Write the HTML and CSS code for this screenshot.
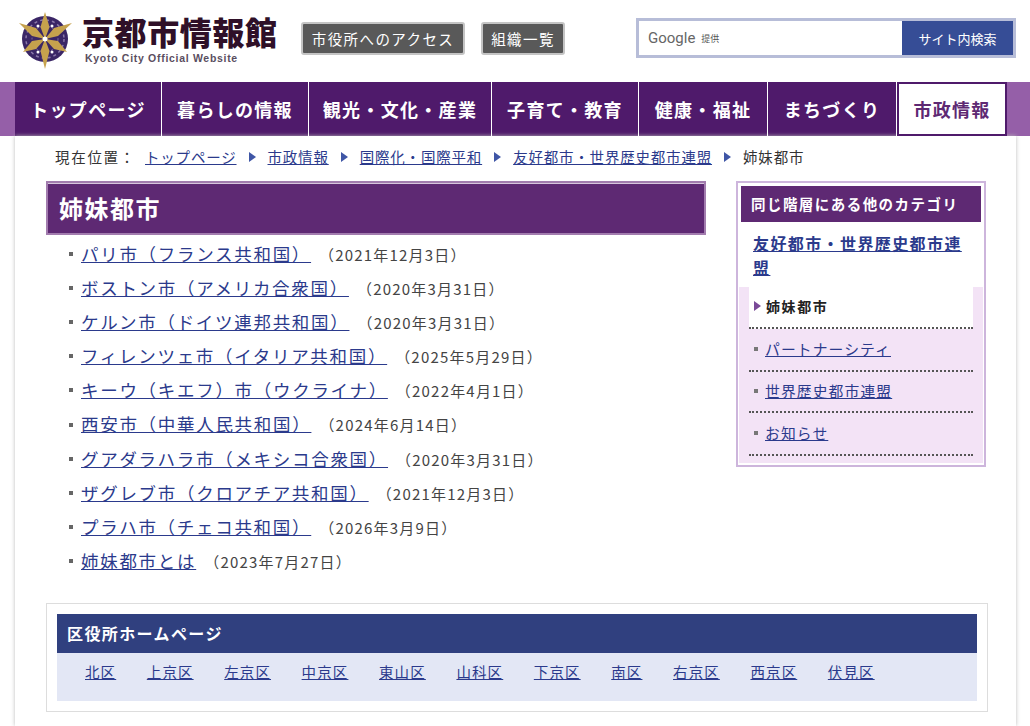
FILE: index.html
```html
<!DOCTYPE html>
<html lang="ja">
<head>
  <meta charset="UTF-8" />
  <meta name="viewport" content="width=device-width, initial-scale=1.0"/>
  <title>姉妹都市 京都市情報館</title>
  <link rel="stylesheet" href="styles.css">
</head>
<body>
  <div class="header">
    <a class="logo" href="#">
      <svg class="crest" width="56" height="62" viewBox="0 0 56 62">
        <circle cx="28" cy="31" r="23" fill="#3a2666"/>
        <circle cx="28" cy="31" r="19" fill="none" stroke="#8a78a8" stroke-width="1.5" stroke-dasharray="3 3"/>
        <circle cx="28" cy="31" r="13" fill="none" stroke="#7d6a9e" stroke-width="1" stroke-dasharray="2 2"/>
        <g fill="#fff">
          <circle cx="17" cy="25" r="2"/><circle cx="39" cy="25" r="2"/>
          <circle cx="17" cy="37" r="2"/><circle cx="39" cy="37" r="2"/>
          <circle cx="21" cy="18" r="1.5"/><circle cx="35" cy="18" r="1.5"/>
          <circle cx="21" cy="44" r="1.5"/><circle cx="35" cy="44" r="1.5"/>
        </g>
        <g fill="#c6a24d">
          <path d="M28 4 L32.5 19 L28 31 L23.5 19 Z"/>
          <path d="M28 61 L32.5 43 L28 31 L23.5 43 Z"/>
          <path d="M2 15 L19 20 L28 31 L15 28 Z"/>
          <path d="M55 15 L37 20 L28 31 L41 28 Z"/>
          <path d="M6 44 L15 33 L28 31 L19 41 Z"/>
          <path d="M50 44 L41 33 L28 31 L37 41 Z"/>
        </g>
        <circle cx="28" cy="31" r="2.5" fill="#fff"/>
      </svg>
      <span class="logo-text">
        <span class="logo-title">京都市情報館</span>
        <span class="logo-sub">Kyoto City Official Website</span>
      </span>
    </a>
    <a class="head-btn btn-access" href="#">市役所へのアクセス</a>
    <a class="head-btn btn-org" href="#">組織一覧</a>
    <div class="search">
      <div class="search-input"><span class="google">Google</span><span class="teikyo">提供</span></div>
      <button class="search-btn">サイト内検索</button>
    </div>
  </div>

  <div class="nav">
    <ul class="nav-list">
      <li class="w1"><a href="#">トップページ</a></li>
      <li class="w1"><a href="#">暮らしの情報</a></li>
      <li class="w2"><a href="#">観光・文化・産業</a></li>
      <li class="w1"><a href="#">子育て・教育</a></li>
      <li class="w3"><a href="#">健康・福祉</a></li>
      <li class="w3"><a href="#">まちづくり</a></li>
      <li class="current"><a href="#">市政情報</a></li>
    </ul>
  </div>

  <div class="page">
    <div class="breadcrumb">
      <span class="here">現在位置：</span>
      <a href="#">トップページ</a><i class="arrow"></i>
      <a href="#">市政情報</a><i class="arrow"></i>
      <a href="#">国際化・国際平和</a><i class="arrow"></i>
      <a href="#">友好都市・世界歴史都市連盟</a><i class="arrow"></i>
      <span>姉妹都市</span>
    </div>

    <div class="columns">
      <div class="main">
        <h1 class="title">姉妹都市</h1>
        <ul class="page-list">
          <li><a href="#">パリ市（フランス共和国）</a><span class="date">（2021年12月3日）</span></li>
          <li><a href="#">ボストン市（アメリカ合衆国）</a><span class="date">（2020年3月31日）</span></li>
          <li><a href="#">ケルン市（ドイツ連邦共和国）</a><span class="date">（2020年3月31日）</span></li>
          <li><a href="#">フィレンツェ市（イタリア共和国）</a><span class="date">（2025年5月29日）</span></li>
          <li><a href="#">キーウ（キエフ）市（ウクライナ）</a><span class="date">（2022年4月1日）</span></li>
          <li><a href="#">西安市（中華人民共和国）</a><span class="date">（2024年6月14日）</span></li>
          <li><a href="#">グアダラハラ市（メキシコ合衆国）</a><span class="date">（2020年3月31日）</span></li>
          <li><a href="#">ザグレブ市（クロアチア共和国）</a><span class="date">（2021年12月3日）</span></li>
          <li><a href="#">プラハ市（チェコ共和国）</a><span class="date">（2026年3月9日）</span></li>
          <li><a href="#">姉妹都市とは</a><span class="date">（2023年7月27日）</span></li>
        </ul>
      </div>

      <div class="side">
        <h2 class="side-head">同じ階層にある他のカテゴリ</h2>
        <p class="side-parent"><a href="#">友好都市・世界歴史都市連盟</a></p>
        <ul class="side-list">
          <li class="active">姉妹都市</li>
          <li class="h44"><a href="#">パートナーシティ</a></li>
          <li class="h41"><a href="#">世界歴史都市連盟</a></li>
          <li class="h43"><a href="#">お知らせ</a></li>
        </ul>
      </div>
    </div>

    <div class="ward-box">
      <div class="ward-head">区役所ホームページ</div>
      <div class="ward-links">
        <a href="#">北区</a>
        <a href="#">上京区</a>
        <a href="#">左京区</a>
        <a href="#">中京区</a>
        <a href="#">東山区</a>
        <a href="#">山科区</a>
        <a href="#">下京区</a>
        <a href="#">南区</a>
        <a href="#">右京区</a>
        <a href="#">西京区</a>
        <a href="#">伏見区</a>
      </div>
    </div>
  </div>
</body>
</html>
```

FILE: styles.css
```css
* {
  box-sizing: border-box;
}

body {
  margin: 0;
  background: #fff;
  color: #333;
  font-family: "Noto Sans CJK JP", "Noto Sans", sans-serif;
  font-size: 15px;
}

a {
  color: #2b3a8c;
}

ul {
  list-style: none;
  margin: 0;
  padding: 0;
}

/* header */
.header {
  display: flex;
  align-items: flex-start;
  height: 82px;
  padding-left: 17px;
}

.logo {
  display: flex;
  width: 284px;
  margin-top: 8px;
  text-decoration: none;
}

.crest {
  flex: none;
}

.logo-text {
  display: flex;
  flex-direction: column;
  margin-left: 9px;
}

.logo-title {
  margin-top: 1px;
  color: #2f1028;
  font-size: 32px;
  font-weight: 900;
  line-height: 44px;
  letter-spacing: 0.6px;
  white-space: nowrap;
}

.logo-sub {
  margin: -1px 0 0 3px;
  color: #5a4e60;
  font-family: "Liberation Sans", sans-serif;
  font-size: 10.5px;
  font-weight: 700;
  line-height: 12px;
  letter-spacing: 0.7px;
  white-space: nowrap;
}

.head-btn {
  display: block;
  height: 33px;
  margin-top: 22px;
  border: 2px solid #c4c4c4;
  border-radius: 3px;
  background: #595959;
  color: #fff;
  font-size: 14.5px;
  line-height: 29px;
  text-align: center;
  text-decoration: none;
  letter-spacing: 1.4px;
  white-space: nowrap;
}

.btn-access {
  width: 164px;
}

.btn-org {
  width: 84px;
  margin-left: 16px;
}

.search {
  display: flex;
  width: 380px;
  height: 40px;
  margin: 18px 0 0 71px;
  border: 3px solid #b7bdd8;
}

.search-input {
  display: flex;
  flex: 1;
  align-items: center;
  padding-left: 9px;
  background: #fff;
}

.google {
  color: #666;
  font-family: "Roboto", sans-serif;
  font-size: 15px;
}

.teikyo {
  margin-left: 6px;
  color: #555;
  font-size: 9px;
}

.search-btn {
  width: 111px;
  border: 0;
  background: #364d96;
  color: #fff;
  font-family: inherit;
  font-size: 13px;
}

/* global nav */
.nav {
  height: 54px;
  padding-left: 15px;
  background: #955fa8;
}

.nav-list {
  display: flex;
  width: 992px;
  height: 54px;
  background: #4f1a6b;
}

.nav-list li {
  flex: none;
  border-right: 1px solid #fff;
}

.nav-list a {
  display: block;
  color: #fff;
  font-size: 18px;
  font-weight: 700;
  line-height: 54px;
  text-align: center;
  text-decoration: none;
  letter-spacing: 1.3px;
  white-space: nowrap;
}

.nav-list .w1 {
  width: 147px;
}

.nav-list .w2 {
  width: 183px;
}

.nav-list .w3 {
  width: 129px;
}

.nav-list .current {
  width: 110px;
  border: 2px solid #4f1a6b;
  background: #fff;
}

.nav-list .current a {
  color: #5e2973;
  line-height: 50px;
}

/* page body */
.page {
  width: 1001px;
  min-height: 590px;
  margin-left: 15px;
  padding: 0 27px 14px 31px;
  background: #fff;
  box-shadow: 0 0 4px #bbb;
}

.breadcrumb {
  display: flex;
  align-items: center;
  height: 45px;
  padding: 0 0 4px 9px;
  font-size: 14.5px;
  letter-spacing: 0.8px;
  white-space: nowrap;
}

.here {
  margin-right: 9px;
  letter-spacing: 1.7px;
}

.arrow {
  width: 0;
  height: 0;
  margin: 0 12px 0 12px;
  border-top: 5px solid transparent;
  border-bottom: 5px solid transparent;
  border-left: 7px solid #3f56a6;
}

.columns {
  display: flex;
  justify-content: space-between;
  align-items: flex-start;
  height: 422px;
  padding-right: 3px;
}

.main {
  width: 660px;
}

.title {
  height: 54px;
  margin: 0;
  padding-left: 11px;
  border: 2px solid #a27cae;
  background: #5e2973;
  box-shadow: inset 0 1px 0 #d8c6de;
  color: #fff;
  font-size: 24px;
  font-weight: 700;
  line-height: 50px;
  letter-spacing: 1.5px;
}

.page-list {
  padding: 2px 0 0 23px;
}

.page-list li {
  display: flex;
  align-items: baseline;
  height: 34.1px;
  font-size: 17.5px;
  line-height: 34px;
  white-space: nowrap;
}

.page-list li::before {
  content: "";
  flex: none;
  align-self: center;
  width: 4px;
  height: 4px;
  margin-right: 8px;
  background: #666;
}

.page-list a {
  letter-spacing: 1.7px;
}

.date {
  margin-left: 8px;
  color: #444;
  font-size: 15px;
  letter-spacing: 1.2px;
}

.side {
  width: 250px;
  height: 286px;
  padding: 3px 1px 2px;
  border: 2px solid #cdb5dc;
}

.side-head {
  height: 36px;
  margin: 0 2px;
  padding-left: 10px;
  background: #5e2973;
  color: #fff;
  font-size: 14.5px;
  font-weight: 700;
  line-height: 36px;
  letter-spacing: 1.45px;
  white-space: nowrap;
}

.side-parent {
  height: 65px;
  margin: 0;
  padding: 9px 14px 0 14px;
  font-size: 16px;
  font-weight: 700;
  line-height: 24px;
  letter-spacing: 1.4px;
}

.side-list {
  height: 176px;
  padding: 0 10px;
  background: #f3e3f6;
}

.side-list li {
  display: flex;
  align-items: center;
  height: 42px;
  padding: 0 0 2px 5px;
  border-bottom: 2px dotted #555;
  font-size: 14.8px;
  letter-spacing: 1.1px;
  white-space: nowrap;
}

.side-list li::before {
  content: "";
  width: 4px;
  height: 4px;
  margin-right: 7px;
  background: #777;
}

.side-list .active {
  height: 42px;
  background: #fff;
  color: #222;
  font-size: 14px;
  font-weight: 700;
  letter-spacing: 1.6px;
}

.side-list .active::before {
  width: 0;
  height: 0;
  margin-right: 5px;
  border-top: 5px solid transparent;
  border-bottom: 5px solid transparent;
  border-left: 7px solid #7a4a98;
  background: none;
}

.side-list .h44 {
  height: 43px;
}

.side-list .h41 {
  height: 41px;
}

.side-list .h43 {
  height: 43px;
}

/* ward links */
.ward-box {
  width: 942px;
  height: 109px;
  padding: 10px;
  border: 1px solid #ddd;
}

.ward-head {
  height: 39px;
  padding-left: 10px;
  background: #30407f;
  color: #fff;
  font-size: 16px;
  font-weight: 700;
  line-height: 38px;
  letter-spacing: 1.4px;
}

.ward-links {
  display: flex;
  gap: 30.6px;
  height: 48px;
  padding: 9px 0 0 28px;
  background: #e3e7f5;
  font-size: 14.5px;
  line-height: 20px;
  letter-spacing: 1.1px;
}
```
